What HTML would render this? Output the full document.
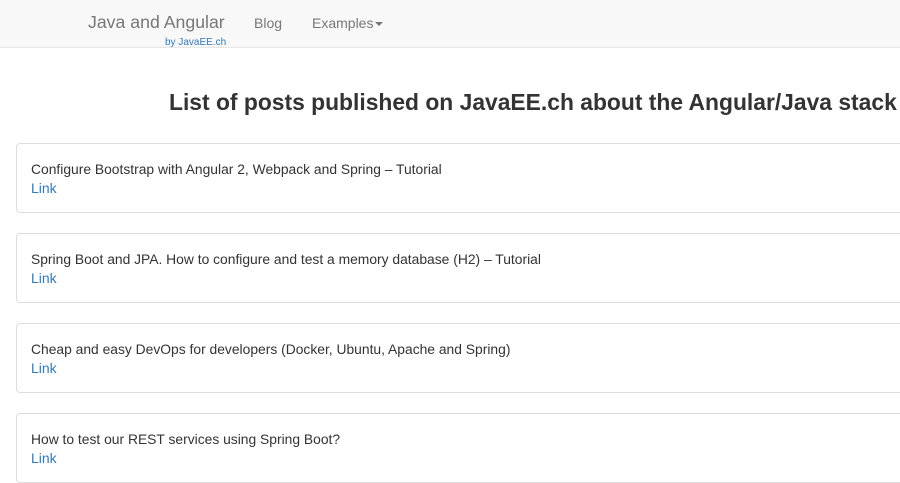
<!DOCTYPE html>
<html><head><style>
body{margin:0;width:900px;height:449px;overflow:hidden;background:#fff;font-family:"Liberation Sans",Arial,sans-serif;font-size:14px;color:#333;position:relative}
.nav{position:absolute;left:0;top:0;width:900px;height:47px;background:#f8f8f8;border-bottom:1px solid #e7e7e7}
.brand{position:absolute;left:88px;top:12px;font-size:17.7px;color:#777}
.by{position:absolute;left:165px;top:37px;font-size:10px;color:#337ab7}
.nl{position:absolute;top:15px;font-size:14px;color:#777}
.caret{display:inline-block;width:0;height:0;border-left:4px solid transparent;border-right:4px solid transparent;border-top:4px solid #777;vertical-align:middle;margin-left:2px}
h1{position:absolute;left:169px;top:89px;margin:0;font-size:22.85px;font-weight:bold;color:#333;white-space:nowrap}
.card{position:absolute;left:16px;width:900px;height:68px;border:1px solid #ddd;border-radius:4px;background:#fff}
.card .t{position:absolute;left:14px;top:17px;white-space:nowrap;font-size:13.85px}
.card a{position:absolute;left:14px;top:36px;color:#337ab7;text-decoration:none}
</style></head><body>
<div class="nav">
<div class="brand">Java and Angular</div>
<div class="by">by JavaEE.ch</div>
<div class="nl" style="left:254px">Blog</div>
<div class="nl" style="left:312px">Examples<span class="caret"></span></div>
</div>
<h1>List of posts published on JavaEE.ch about the Angular/Java stack</h1>
<div class="card" style="top:143px"><div class="t">Configure Bootstrap with Angular 2, Webpack and Spring – Tutorial</div><a>Link</a></div>
<div class="card" style="top:233px"><div class="t">Spring Boot and JPA. How to configure and test a memory database (H2) – Tutorial</div><a>Link</a></div>
<div class="card" style="top:323px"><div class="t">Cheap and easy DevOps for developers (Docker, Ubuntu, Apache and Spring)</div><a>Link</a></div>
<div class="card" style="top:413px"><div class="t">How to test our REST services using Spring Boot?</div><a>Link</a></div>
</body></html>
